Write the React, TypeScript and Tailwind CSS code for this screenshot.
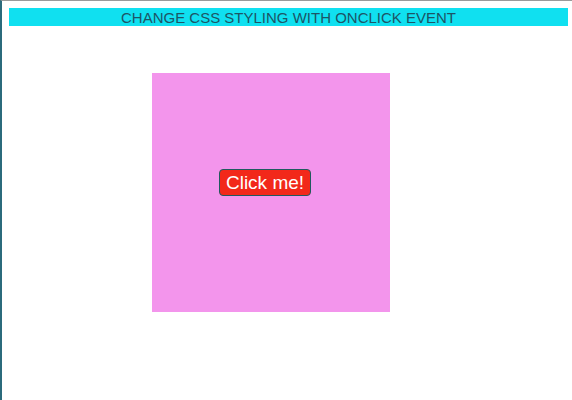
import { useState } from "react";

const App: React.FC = () => {
  const [on, setOn] = useState(false);
  return (
    <div className="w-[572px] h-[400px] bg-white border-l-2 border-l-[#2b6b7c] border-t border-t-[#9a9a9a] font-['Liberation_Sans',Arial,sans-serif] overflow-hidden">
      {/* Heading */}
      <div className="ml-[7px] mt-[7px] w-[559px] h-[18px] bg-[#10e0f0] flex items-center justify-center">
        <h1 className="text-[15px] leading-none text-[#1d5566] uppercase">Change CSS styling with onClick event</h1>
      </div>

      {/* Box */}
      <div
        className={`ml-[150px] mt-[47px] w-[238px] h-[239px] flex items-start justify-center pt-[96px] pr-[12px] ${
          on ? "bg-[#7fd6f0]" : "bg-[#f395ec]"
        }`}
      >
        <button
          onClick={() => setOn(!on)}
          className="h-[27px] px-[6px] bg-[#f2281a] text-white text-[19px] leading-none rounded-[4px] border border-[#1f5a60]"
        >
          Click me!
        </button>
      </div>
    </div>
  );
};

export default App;
